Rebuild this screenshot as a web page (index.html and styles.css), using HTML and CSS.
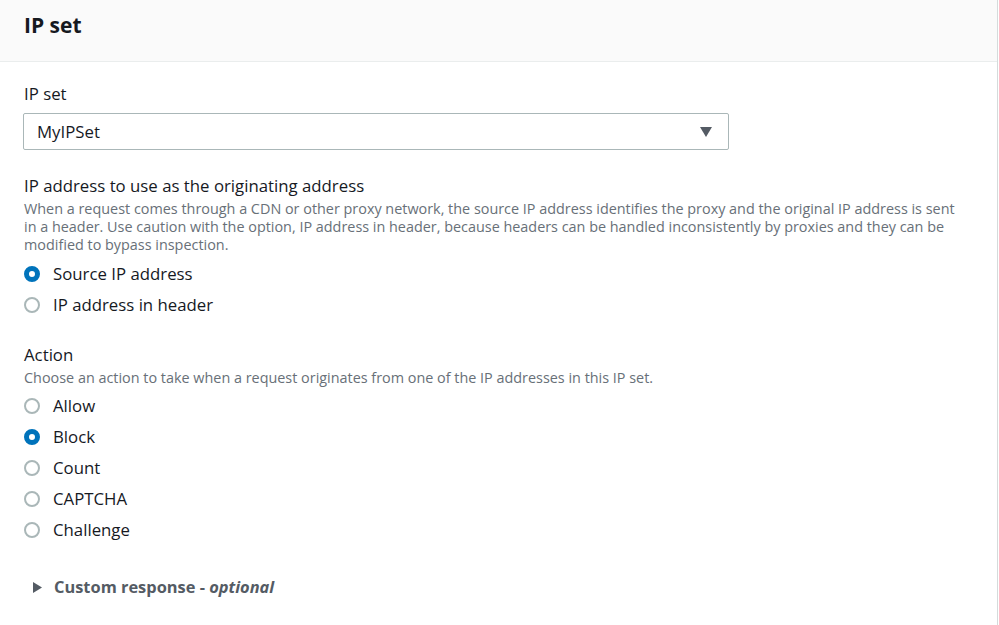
FILE: index.html
```html
<!DOCTYPE html>
<html lang="en">
<head>
<meta charset="utf-8">
<title>IP set</title>
<link rel="stylesheet" href="styles.css">
</head>
<body>
<div class="panel">
  <div class="panel-header"><h2 class="panel-title">IP set</h2></div>
  <div class="panel-body">
    <div class="field">
      <div class="label">IP set</div>
      <div class="select">
        <span class="select-value">MyIPSet</span>
        <svg class="caret" width="12" height="10" viewBox="0 0 12 10"><path d="M0 0h12L6 10z" fill="#545b64"/></svg>
      </div>
    </div>
    <div class="field field-gap">
      <div class="label">IP address to use as the originating address</div>
      <div class="desc">When a request comes through a CDN or other proxy network, the source IP address identifies the proxy and the original IP address is sent in a header. Use caution with the option, IP address in header, because headers can be handled inconsistently by proxies and they can be modified to bypass inspection.</div>
      <div class="radios">
        <div class="radio"><span class="dot checked"></span><span>Source IP address</span></div>
        <div class="radio"><span class="dot"></span><span>IP address in header</span></div>
      </div>
    </div>
    <div class="field field-gap2">
      <div class="label">Action</div>
      <div class="desc">Choose an action to take when a request originates from one of the IP addresses in this IP set.</div>
      <div class="radios">
        <div class="radio"><span class="dot"></span><span>Allow</span></div>
        <div class="radio"><span class="dot checked"></span><span>Block</span></div>
        <div class="radio"><span class="dot"></span><span>Count</span></div>
        <div class="radio"><span class="dot"></span><span>CAPTCHA</span></div>
        <div class="radio"><span class="dot"></span><span>Challenge</span></div>
      </div>
    </div>
    <div class="expander">
      <svg class="tri" width="9" height="11" viewBox="0 0 9 11"><path d="M0 0L9 5.5L0 11z" fill="#545b64"/></svg>
      <span class="exp-title">Custom response - <i>optional</i></span>
    </div>
  </div>
</div>
</body>
</html>
```
FILE: styles.css
```css
html, body {
  margin: 0;
  padding: 0;
  background: #ffffff;
}
body {
  font-family: "Open Sans", "Noto Sans", Arial, sans-serif;
  color: #16191f;
  width: 999px;
  height: 625px;
  overflow: hidden;
}
.panel {
  width: 998px;
  height: 625px;
  box-sizing: border-box;
  border-right: 1px solid #d5dbdb;
  background: #fff;
}
.panel-header {
  height: 62px;
  box-sizing: border-box;
  background: #fafafa;
  border-bottom: 1px solid #eaeded;
  padding: 10px 24px 0;
}
.panel-title {
  margin: 0;
  font-size: 21px;
  font-weight: 700;
  line-height: 30px;
}
.panel-body {
  padding: 20px 24px 0 24px;
}
.label {
  font-size: 16.8px;
  line-height: 24px;
}
.select {
  margin-top: 7px;
  margin-left: -1px;
  width: 706px;
  height: 37px;
  box-sizing: border-box;
  border: 1px solid #aab7b8;
  border-radius: 2px;
  display: flex;
  align-items: center;
  justify-content: space-between;
  padding: 0 16px 0 13px;
}
.select-value {
  font-size: 16.8px;
}
.caret {
  display: block;
}
.field-gap {
  margin-top: 24px;
}
.field-gap2 {
  margin-top: 26px;
}
.desc {
  margin-top: 2px;
  max-width: 940px;
  font-size: 14.4px;
  line-height: 18px;
  color: #687078;
}
.radios {
  margin-top: 8px;
  display: flex;
  flex-direction: column;
  gap: 7px;
}
.field-gap2 .radios {
  margin-top: 7px;
}
.radio {
  display: flex;
  align-items: center;
  gap: 13px;
  font-size: 16.8px;
  line-height: 24px;
  height: 24px;
}
.dot {
  width: 16px;
  height: 16px;
  box-sizing: border-box;
  border-radius: 50%;
  border: 2px solid #aab7b8;
  background: #fff;
  flex: none;
}
.dot.checked {
  border: 5px solid #0073bb;
}
.expander {
  margin-top: 33px;
  display: flex;
  align-items: center;
  gap: 12px;
  padding-left: 9px;
}
.tri {
  display: block;
}
.exp-title {
  font-size: 16.4px;
  font-weight: 700;
  color: #545b64;
  line-height: 24px;
}
.exp-title i {
  font-weight: 700;
}
```
